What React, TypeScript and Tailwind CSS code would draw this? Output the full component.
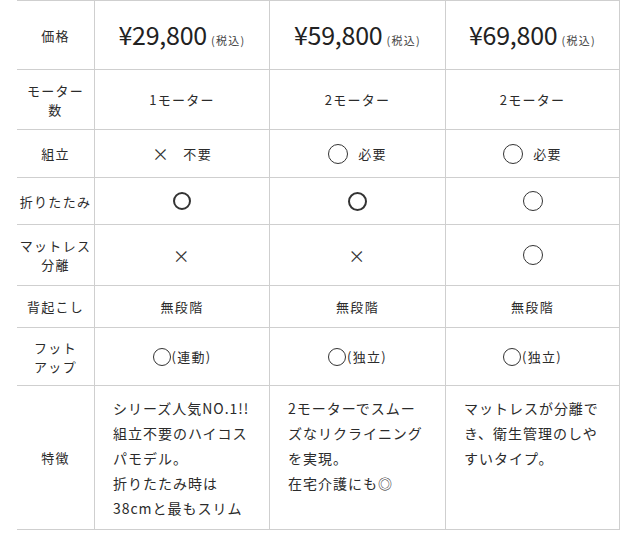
import type { ReactNode } from 'react';

const font = { fontFamily: '"Noto Sans CJK JP", "Noto Sans", sans-serif' };

// thin / bold circle marks used in the table
function Circle({ size = 'w-[20px] h-[20px]', bold = false }: { size?: string; bold?: boolean }) {
  return (
    <span
      className={`inline-block rounded-full border-[#333] ${size} ${bold ? 'border-[2.5px]' : 'border-[1.5px]'}`}
    />
  );
}

function Cross({ className = 'text-[17px]' }: { className?: string }) {
  return <span className={`leading-none text-[#333] ${className}`}>×</span>;
}

type Row = {
  label: ReactNode;
  h: string;
  cells: ReactNode[];
  top?: boolean;
};

const rows: Row[] = [
  {
    label: '価格',
    h: 'h-[69px]',
    cells: ['29,800', '59,800', '69,800'].map((p) => (
      <span className="flex items-baseline">
        <span className="text-[25px] font-normal tracking-[-0.01em] text-[#222]">¥{p}</span>
        <span className="ml-[4px] text-[11px] text-[#444]">(税込)</span>
      </span>
    )),
  },
  {
    label: (
      <>
        モーター
        <br />数
      </>
    ),
    h: 'h-[60px]',
    cells: ['1モーター', '2モーター', '2モーター'],
  },
  {
    label: '組立',
    h: 'h-[48px]',
    cells: [
      <span className="flex items-center gap-[13px]">
        <Cross className="text-[17px]" />
        <span>不要</span>
      </span>,
      <span className="flex items-center gap-[10px]">
        <Circle />
        <span>必要</span>
      </span>,
      <span className="flex items-center gap-[10px]">
        <Circle />
        <span>必要</span>
      </span>,
    ],
  },
  {
    label: '折りたたみ',
    h: 'h-[47px]',
    cells: [
      <Circle size="w-[18px] h-[18px]" bold />,
      <Circle size="w-[19px] h-[19px]" bold />,
      <Circle />,
    ],
  },
  {
    label: (
      <>
        マットレス
        <br />
        分離
      </>
    ),
    h: 'h-[61px]',
    cells: [<Cross />, <Cross />, <Circle />],
  },
  {
    label: '背起こし',
    h: 'h-[42px]',
    cells: ['無段階', '無段階', '無段階'],
  },
  {
    label: (
      <>
        フット
        <br />
        アップ
      </>
    ),
    h: 'h-[58px]',
    cells: ['(連動)', '(独立)', '(独立)'].map((t) => (
      <span className="flex items-center">
        <Circle size="w-[18px] h-[18px]" />
        <span className="ml-[1px]">{t}</span>
      </span>
    )),
  },
  {
    label: '特徴',
    h: 'h-[144px]',
    top: true,
    cells: [
      <>
        シリーズ人気NO.1!!
        <br />
        組立不要のハイコスパモデル。
        <br />
        折りたたみ時は
        <br />
        38cmと最もスリム
      </>,
      <>
        2モーターでスムーズなリクライニングを実現。
        <br />
        在宅介護にも◎
      </>,
      <>マットレスが分離でき、衛生管理のしやすいタイプ。</>,
    ],
  },
];

export default function App() {
  return (
    <div className="min-h-[539px] bg-white text-[#2b2b2b]" style={font}>
      <div className="ml-[17px] w-[603px] border-t border-[#cfcfcf]">
        {rows.map((row, i) => (
          <div
            key={i}
            className={`grid grid-cols-[78px_175px_176px_174px] border-b border-[#cfcfcf] ${row.h}`}
          >
            <div className="flex items-center justify-center border-r border-[#cfcfcf] text-center text-[13px] leading-[19px] tracking-[0.1em]">
              <span>{row.label}</span>
            </div>
            {row.cells.map((c, j) =>
              row.top ? (
                <div
                  key={j}
                  className="border-r border-[#cfcfcf] px-[18px] pt-[10px] text-[14px] leading-[25px] tracking-[0.07em]"
                >
                  {c}
                </div>
              ) : (
                <div
                  key={j}
                  className="flex items-center justify-center border-r border-[#cfcfcf] text-[13px] tracking-[0.1em]"
                >
                  {c}
                </div>
              ),
            )}
          </div>
        ))}
      </div>
    </div>
  );
}
